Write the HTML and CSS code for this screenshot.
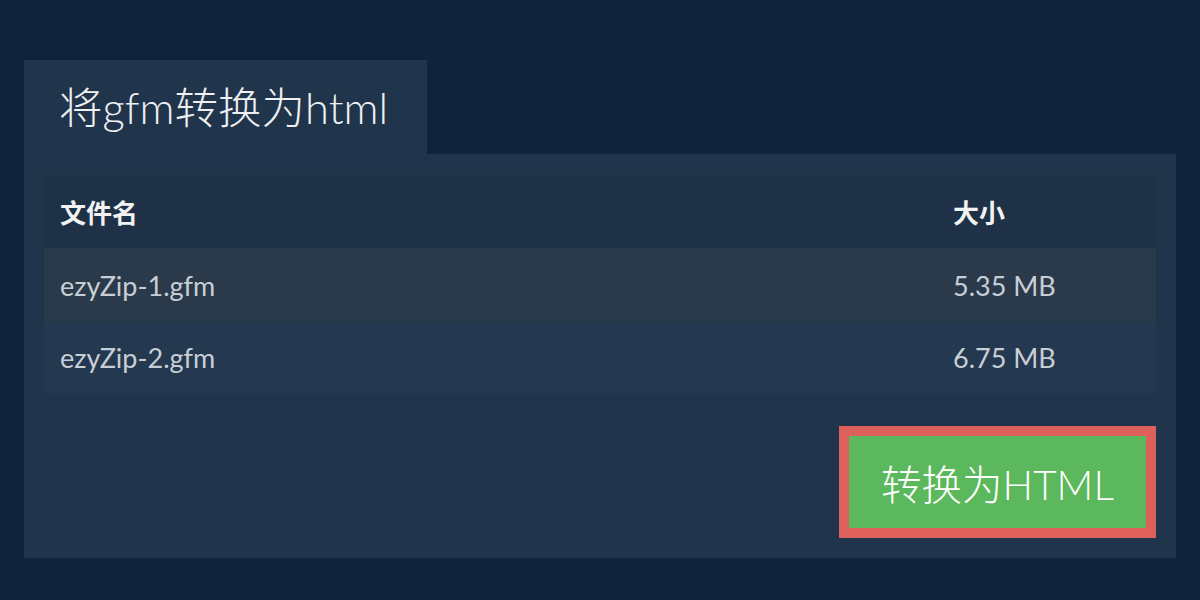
FILE: index.html
```html
<!DOCTYPE html>
<html lang="zh">
<head>
<meta charset="utf-8">
<title>将gfm转换为html</title>
<link rel="stylesheet" href="styles.css">
</head>
<body>
<div class="page">
  <div class="tab">将gfm转换为html</div>
  <div class="panel">
    <table class="files">
      <thead>
        <tr><th class="col-name">文件名</th><th class="col-size">大小</th></tr>
      </thead>
      <tbody>
        <tr class="odd"><td>ezyZip-1.gfm</td><td>5.35 MB</td></tr>
        <tr class="even"><td>ezyZip-2.gfm</td><td>6.75 MB</td></tr>
      </tbody>
    </table>
    <div class="actions">
      <button class="convert">转换为HTML</button>
    </div>
  </div>
</div>
</body>
</html>
```
FILE: styles.css
```css
html, body {
  margin: 0;
  padding: 0;
  background: #10233a;
  font-family: Lato, "Noto Sans CJK SC", sans-serif;
}
.page {
  padding: 60px 24px 0;
}
.tab {
  display: inline-block;
  background: #20344c;
  color: #eef0f2;
  font-size: 43.5px;
  font-weight: 300;
  line-height: 94px;
  height: 94px;
  padding: 0 35px;
  box-sizing: border-box;
  width: 403px;
}
.panel {
  background: #20344c;
  padding: 21px 20px 20px;
}
.files {
  width: 100%;
  border-collapse: collapse;
  table-layout: fixed;
}
.files th, .files td {
  text-align: left;
  padding: 0 16px;
}
.files th {
  background: #1e3146;
  color: #f2f2f2;
  font-size: 26px;
  font-weight: 700;
  height: 73px;
}
.col-size { width: 187px; }
.files td {
  font-size: 27px;
  color: #c8ced6;
  height: 72px;
}
.files tr.odd td { background: #2b3a4b; height: 74px; }
.files tr.even td { background: #24384f; height: 71px; }
.actions {
  display: flex;
  justify-content: flex-end;
  margin-top: 33px;
}
.convert {
  width: 317px;
  height: 112px;
  background: #5cb85c;
  border: 10px solid #dd605c;
  color: #ffffff;
  font-family: Lato, "Noto Sans CJK SC", sans-serif;
  font-size: 40.5px;
  font-weight: 300;
  padding: 0;
  cursor: pointer;
}
```
